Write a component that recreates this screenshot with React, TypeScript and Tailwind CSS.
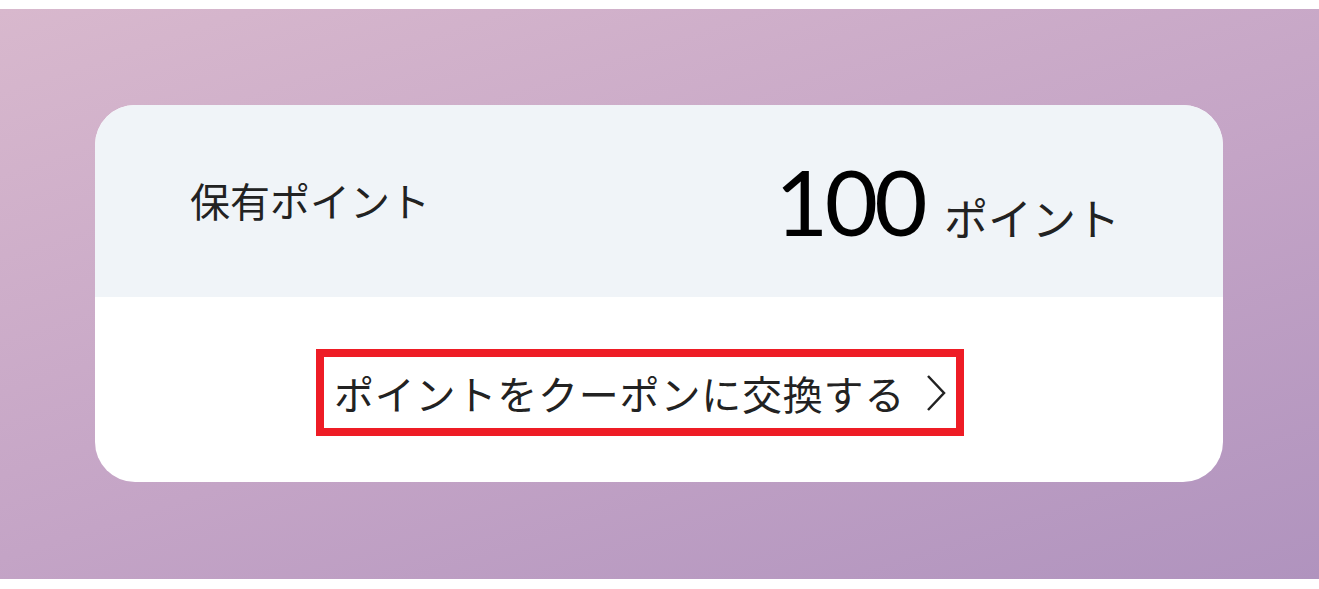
import React from "react";

export default function App() {
  const jp = { fontFamily: '"Noto Sans CJK JP", "Noto Sans", sans-serif' };
  return (
    <div className="w-full bg-white pt-[9px] pb-[10px]">
      <div className="w-full h-[570px] px-[95px] py-[96px] bg-[linear-gradient(162deg,#d8b8cd_0%,#c4a4c6_55%,#b093be_100%)]">
        <div className="w-[1128px] h-[377px] rounded-[40px] overflow-hidden bg-white flex flex-col">
          <div className="h-[192px] bg-[#f0f4f8] flex items-center justify-between pl-[95px] pr-[103px]">
            <span style={jp} className="text-[40px] leading-none text-[#222] -mt-[2px]">
              保有ポイント
            </span>
            <div className="flex items-baseline gap-[20px] mt-[0px]">
              <span
                style={{ fontFamily: 'Lato, "Noto Sans", sans-serif' }}
                className="text-[92px] leading-none text-black tracking-[-0.04em]"
              >
                100
              </span>
              <span style={jp} className="text-[44px] leading-none text-[#222]">
                ポイント
              </span>
            </div>
          </div>
          <div className="flex-1 flex items-start justify-start pt-[52px] pl-[221px]">
            <div className="w-[648px] h-[87px] border-[8px] border-[#ee1c25] flex items-center justify-between pl-[10px] pr-[9px]">
              <span style={jp} className="text-[40px] leading-none text-[#222] tracking-[0.02em]">
                ポイントをクーポンに交換する
              </span>
              <svg width="22" height="38" viewBox="0 0 22 38">
                <polyline points="3,2 19,19 3,36" fill="none" stroke="#222" strokeWidth="2.5" />
              </svg>
            </div>
          </div>
        </div>
      </div>
    </div>
  );
}
